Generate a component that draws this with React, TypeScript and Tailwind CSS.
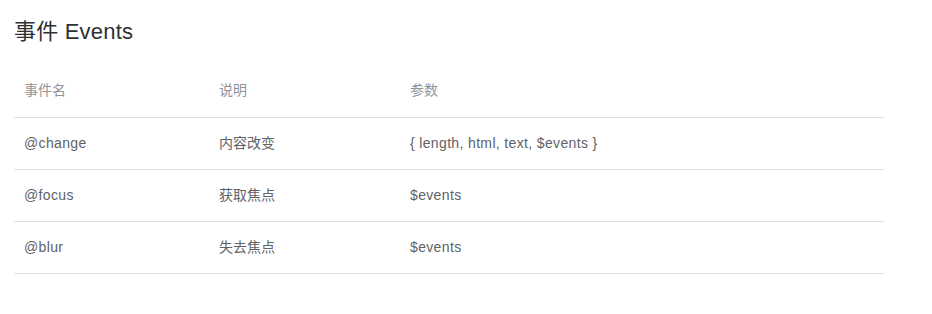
const rows = [
  { name: '@change', desc: '内容改变', args: '{ length, html, text, $events }' },
  { name: '@focus', desc: '获取焦点', args: '$events' },
  { name: '@blur', desc: '失去焦点', args: '$events' },
];

export default function App() {
  return (
    <div
      className="bg-white w-[932px] h-[314px] px-[14px] pt-[17px]"
      style={{ fontFamily: '"Liberation Sans", Arial, "Noto Sans CJK SC", sans-serif' }}
    >
      <h3 className="text-[22px] leading-[30px] text-[#303133] font-normal tracking-[0.2px]">事件 Events</h3>
      <table className="w-[870px] mt-[18px] border-collapse text-[14px] table-fixed">
        <thead>
          <tr className="h-[52px] border-b border-[#dcdfe6] text-left">
            <th className="w-[195px] px-[10px] font-normal text-[#909399]">事件名</th>
            <th className="w-[191px] px-[10px] font-normal text-[#909399]">说明</th>
            <th className="px-[10px] font-normal text-[#909399]">参数</th>
          </tr>
        </thead>
        <tbody>
          {rows.map((r) => (
            <tr key={r.name} className="h-[52px] border-b border-[#dcdfe6] text-[#606266]">
              <td className="px-[10px] tracking-[0.35px]">{r.name}</td>
              <td className="px-[10px]">{r.desc}</td>
              <td className="px-[10px] tracking-[0.35px]">{r.args}</td>
            </tr>
          ))}
        </tbody>
      </table>
    </div>
  );
}
